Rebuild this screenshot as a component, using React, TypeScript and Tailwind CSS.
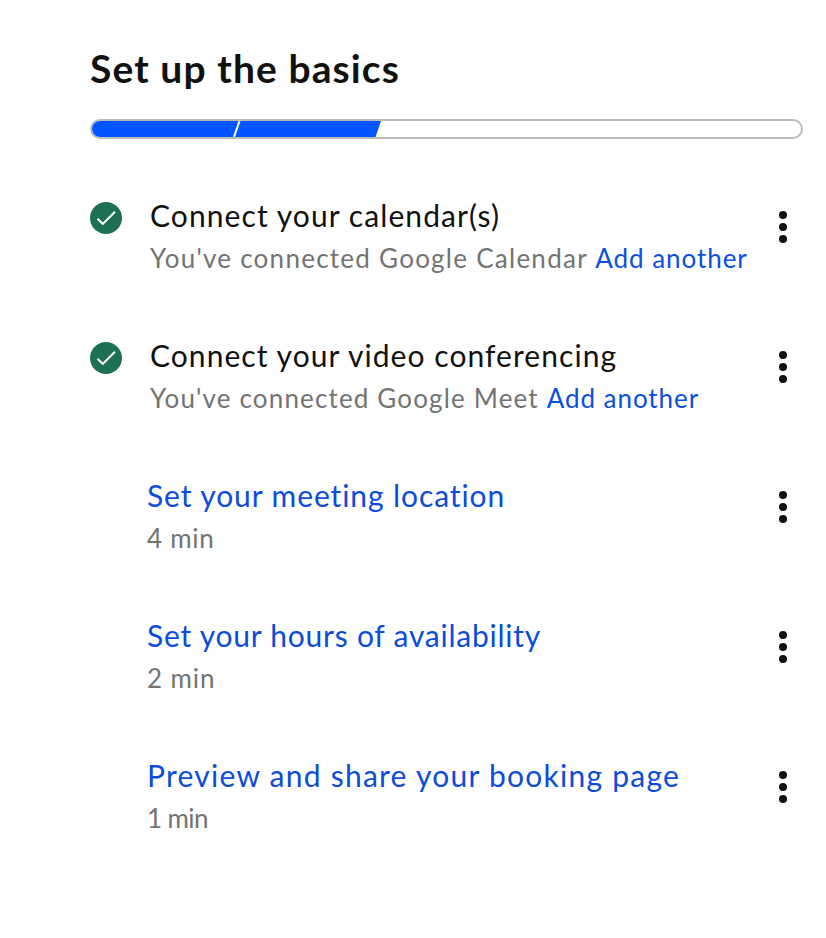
import { clsx } from 'clsx'

type Step = {
  id: number
  title: string
  titleTracking: string
  detail: string
  detailTracking: string
  action?: string
  done: boolean
}

const steps: Step[] = [
  {
    id: 1,
    title: 'Connect your calendar(s)',
    titleTracking: 'tracking-[1.08px]',
    detail: "You've connected Google Calendar",
    detailTracking: 'tracking-[1.26px]',
    action: 'Add another',
    done: true,
  },
  {
    id: 2,
    title: 'Connect your video conferencing',
    titleTracking: 'tracking-[1.06px]',
    detail: "You've connected Google Meet",
    detailTracking: 'tracking-[1.16px]',
    action: 'Add another',
    done: true,
  },
  {
    id: 3,
    title: 'Set your meeting location',
    titleTracking: 'tracking-[0.91px]',
    detail: '4 min',
    detailTracking: 'tracking-[0.7px]',
    done: false,
  },
  {
    id: 4,
    title: 'Set your hours of availability',
    titleTracking: 'tracking-[0.77px]',
    detail: '2 min',
    detailTracking: 'tracking-[0.9px]',
    done: false,
  },
  {
    id: 5,
    title: 'Preview and share your booking page',
    titleTracking: 'tracking-[1.25px]',
    detail: '1 min',
    detailTracking: 'tracking-[-0.6px]',
    done: false,
  },
]

const CheckBadge = () => (
  <svg className="size-8" viewBox="0 0 32 32" fill="none">
    <circle cx="16" cy="16" r="16" fill="#1d7051" />
    <path d="M7.5 16.8l5.3 5.1L25 9.8" stroke="white" strokeWidth="2.1" />
  </svg>
)

const StepRow = ({ step }: { step: Step }) => (
  <li className="flex h-[140px]">
    <div className={clsx('shrink-0 pt-[6px]', step.done ? 'w-[60px]' : 'w-[57px]')}>
      {step.done && <CheckBadge />}
    </div>
    <div className="min-w-0 grow whitespace-nowrap">
      <h2
        className={clsx(
          '-mt-px text-[30px] leading-10',
          step.titleTracking,
          step.done ? 'text-[#111]' : 'text-[#0b4cdb]'
        )}
      >
        {step.title}
      </h2>
      <p className={clsx('pt-[3px] text-[26px] leading-10 text-[#737373]', step.detailTracking)}>
        {step.detail}{' '}
        {step.action && (
          <a href="#" className="tracking-[0.95px] text-[#0b4fe0]">
            {step.action}
          </a>
        )}
      </p>
    </div>
    <button aria-label="More options" className="mt-[15px] mr-4 h-8 shrink-0">
      <svg className="h-8 w-2" viewBox="0 0 8 32" fill="#111">
        <circle cx="4" cy="4" r="4" />
        <circle cx="4" cy="16" r="4" />
        <circle cx="4" cy="28" r="4" />
      </svg>
    </button>
  </li>
)

export default function App() {
  return (
    <main className="h-[938px] bg-white pt-[47px] pr-[23px] pl-[90px] font-['Lato',sans-serif]">
      <h1 className="text-[39px] leading-[42px] font-bold tracking-[1.1px] text-[#111]">
        Set up the basics
      </h1>

      {/* Progress: two of five steps complete */}
      <div className="mt-[30px] h-5 rounded-full border-2 border-[#bbb]">
        <svg className="h-4 w-full" viewBox="0 0 709 16">
          <path d="M8 0H289L283.5 16H8A8 8 0 0 1 8 0Z" fill="#0055ff" />
          <path d="M147.5 0L142 16" stroke="white" strokeWidth="2" />
        </svg>
      </div>

      <ul className="mt-[57px]">
        {steps.map((step) => (
          <StepRow key={step.id} step={step} />
        ))}
      </ul>
    </main>
  )
}
